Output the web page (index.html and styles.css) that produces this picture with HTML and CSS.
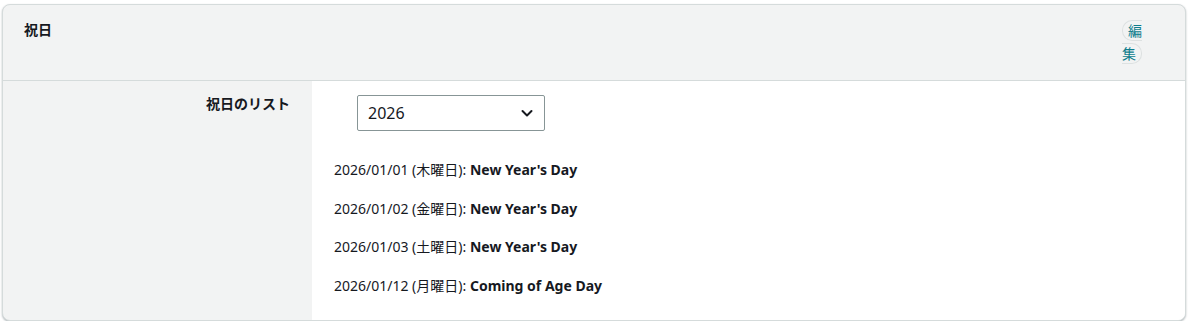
FILE: index.html
```html
<!DOCTYPE html>
<html lang="ja">
<head>
    <meta charset="UTF-8">
    <meta name="viewport" content="width=device-width, initial-scale=1.0">
    <title>祝日</title>
    <link rel="stylesheet" href="styles.css">
</head>
<body>
    <div class="card">
        <div class="card-header">
            <h2>祝日</h2>
            <div class="edit-wrap">
                <span class="edit-btn">編集</span>
            </div>
        </div>

        <div class="card-body">
            <div class="field-label">祝日のリスト</div>
            <div class="field-value">
                <div class="year-select">
                    <span>2026</span>
                    <svg width="14" height="14" viewBox="0 0 14 14">
                        <path d="M2.5 5l4.5 4.5L11.5 5" fill="none" stroke="#16191f" stroke-width="2" stroke-linecap="round" stroke-linejoin="round"/>
                    </svg>
                </div>

                <ul class="holidays">
                    <li>2026/01/01 (木曜日): <b>New Year's Day</b></li>
                    <li>2026/01/02 (金曜日): <b>New Year's Day</b></li>
                    <li>2026/01/03 (土曜日): <b>New Year's Day</b></li>
                    <li>2026/01/12 (月曜日): <b>Coming of Age Day</b></li>
                </ul>
            </div>
        </div>
    </div>
</body>
</html>
```

FILE: styles.css
```css
body {
    margin: 0;
    padding: 4px 14px 0 2px;
    font-family: "Noto Sans", "Noto Sans CJK JP", sans-serif;
    color: #16191f;
    background: #fff;
}
.card {
    border: 1px solid #d5dbdb;
    border-radius: 8px;
    overflow: hidden;
    box-shadow: 0 1px 2px rgba(0, 28, 36, 0.3);
    background: #f2f3f3;
}
.card-header {
    display: flex;
    justify-content: space-between;
    height: 76px;
    box-sizing: border-box;
    border-bottom: 1px solid #d5dbdb;
}
.card-header h2 {
    margin: 0;
    padding: 14px 0 0 21px;
    font-size: 14px;
    font-weight: 700;
    line-height: 22px;
}
.edit-wrap {
    width: 22px;
    margin: 14px 41px 0 0;
    font-size: 14px;
    line-height: 23px;
}
.edit-btn {
    color: #0f7d8c;
    border: 1px solid #dde1e1;
    border-radius: 10px;
    padding: 0 5px;
}
.card-body {
    display: flex;
    height: 239px;
}
.field-label {
    width: 309px;
    box-sizing: border-box;
    padding: 13px 22px 0 0;
    text-align: right;
    font-size: 14px;
    font-weight: 700;
    line-height: 20px;
}
.field-value {
    flex: 1;
    background: #fff;
    padding: 14px 0 0 22px;
}
.year-select {
    display: flex;
    align-items: center;
    justify-content: space-between;
    width: 188px;
    height: 36px;
    box-sizing: border-box;
    margin-left: 23px;
    padding: 0 10px;
    border: 1px solid #879596;
    border-radius: 2px;
    font-size: 16px;
}
.holidays {
    list-style: none;
    margin: 0;
    padding: 29px 0 0;
}
.holidays li {
    font-size: 14px;
    line-height: 20px;
    margin-bottom: 18.7px;
}
.holidays b {
    font-weight: 700;
}
```
